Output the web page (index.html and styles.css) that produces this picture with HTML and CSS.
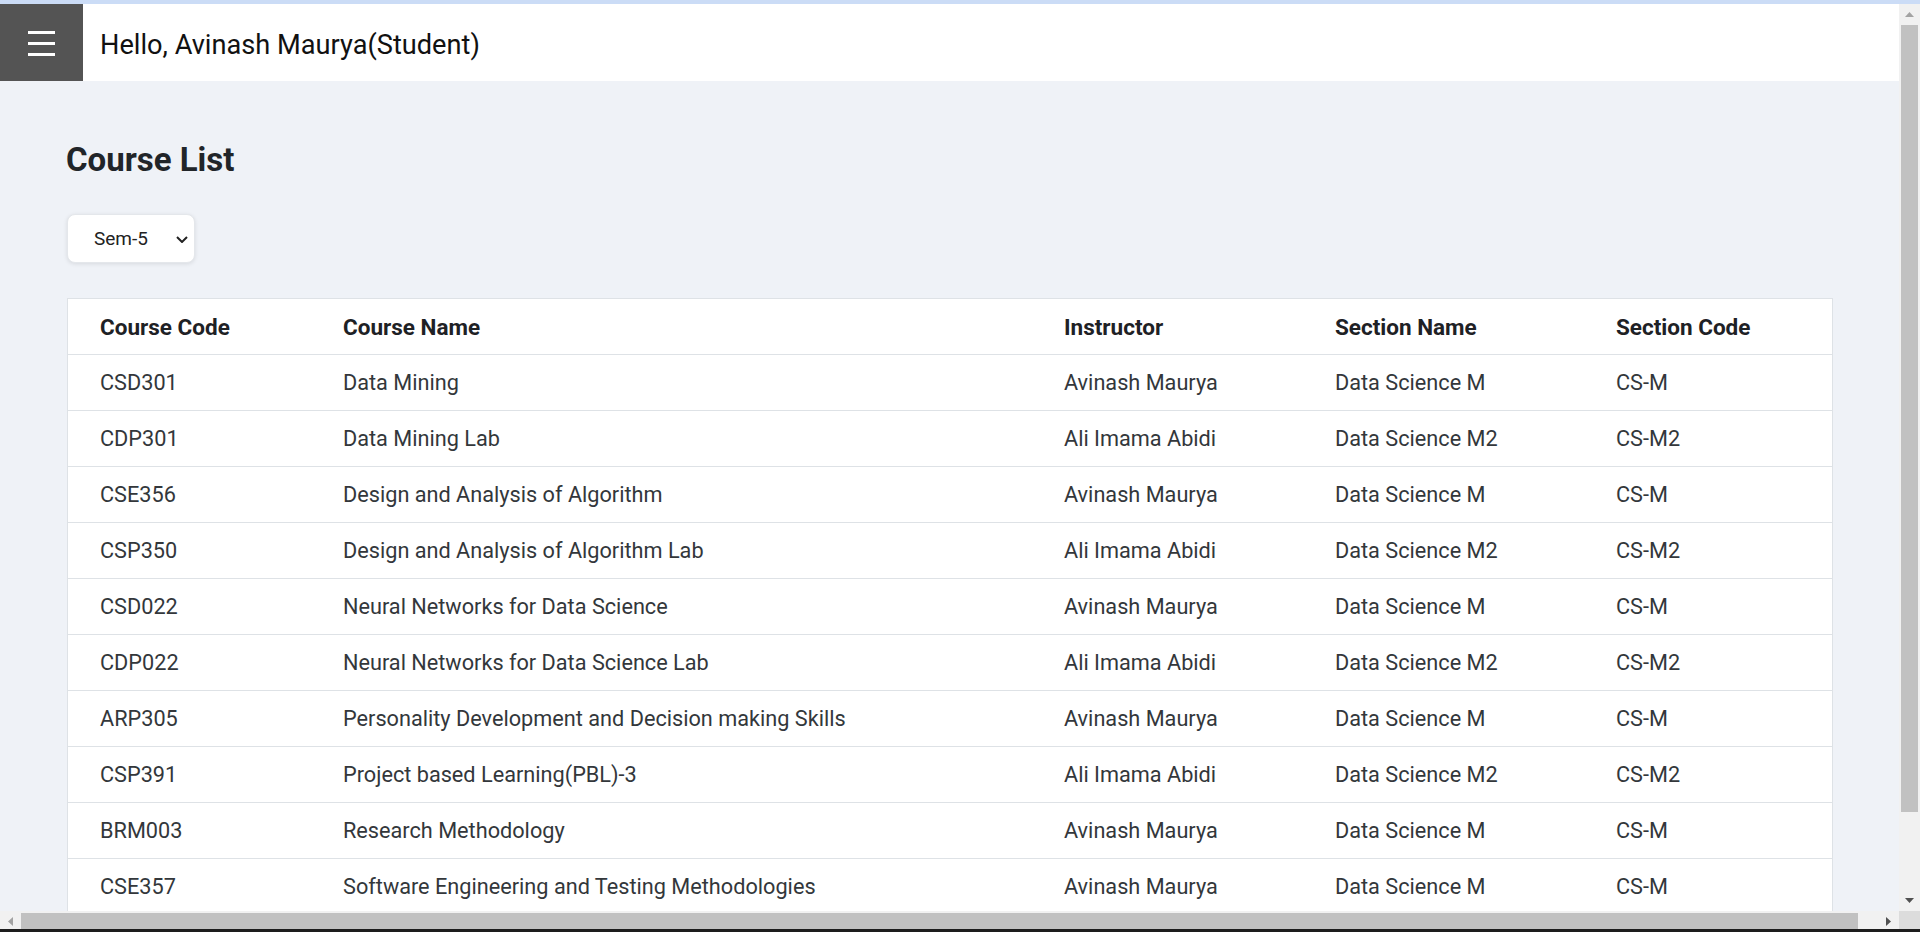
FILE: index.html
```html
<!DOCTYPE html>
<html lang="en">
<head>
<meta charset="utf-8">
<title>Course List</title>
<link rel="stylesheet" href="styles.css">
</head>
<body>
<div class="topline"></div>
<div class="app">
  <header class="topbar">
    <button class="menu" aria-label="Menu"><span></span><span></span><span></span></button>
    <div class="greeting">Hello, Avinash Maurya(Student)</div>
  </header>
  <main class="content">
    <h1 class="title">Course List</h1>
    <div class="select-wrap">
      <select class="sem"><option>Sem-5</option></select>
      <svg class="chev" width="12" height="7" viewBox="0 0 12 7"><path d="M1 1 L6 6 L11 1" fill="none" stroke="#222" stroke-width="2"/></svg>
    </div>
    <div class="card">
      <table class="courses">
        <colgroup>
          <col class="c1"><col class="c2"><col class="c3"><col class="c4"><col class="c5">
        </colgroup>
        <thead>
          <tr><th>Course Code</th><th>Course Name</th><th>Instructor</th><th>Section Name</th><th>Section Code</th></tr>
        </thead>
        <tbody>
          <tr><td>CSD301</td><td>Data Mining</td><td>Avinash Maurya</td><td>Data Science M</td><td>CS-M</td></tr>
          <tr><td>CDP301</td><td>Data Mining Lab</td><td>Ali Imama Abidi</td><td>Data Science M2</td><td>CS-M2</td></tr>
          <tr><td>CSE356</td><td>Design and Analysis of Algorithm</td><td>Avinash Maurya</td><td>Data Science M</td><td>CS-M</td></tr>
          <tr><td>CSP350</td><td>Design and Analysis of Algorithm Lab</td><td>Ali Imama Abidi</td><td>Data Science M2</td><td>CS-M2</td></tr>
          <tr><td>CSD022</td><td>Neural Networks for Data Science</td><td>Avinash Maurya</td><td>Data Science M</td><td>CS-M</td></tr>
          <tr><td>CDP022</td><td>Neural Networks for Data Science Lab</td><td>Ali Imama Abidi</td><td>Data Science M2</td><td>CS-M2</td></tr>
          <tr><td>ARP305</td><td>Personality Development and Decision making Skills</td><td>Avinash Maurya</td><td>Data Science M</td><td>CS-M</td></tr>
          <tr><td>CSP391</td><td>Project based Learning(PBL)-3</td><td>Ali Imama Abidi</td><td>Data Science M2</td><td>CS-M2</td></tr>
          <tr><td>BRM003</td><td>Research Methodology</td><td>Avinash Maurya</td><td>Data Science M</td><td>CS-M</td></tr>
          <tr><td>CSE357</td><td>Software Engineering and Testing Methodologies</td><td>Avinash Maurya</td><td>Data Science M</td><td>CS-M</td></tr>
        </tbody>
      </table>
    </div>
  </main>
</div>
<div class="vscroll">
  <div class="sbtn"><svg width="9" height="5" viewBox="0 0 9 5"><polygon points="0,5 4.5,0 9,5" fill="#a3a3a3"/></svg></div>
  <div class="vthumb"></div>
  <div class="vrest"></div>
  <div class="sbtn"><svg width="9" height="5" viewBox="0 0 9 5"><polygon points="0,0 9,0 4.5,5" fill="#505050"/></svg></div>
</div>
<div class="hscroll">
  <div class="hbtn"><svg width="5" height="9" viewBox="0 0 5 9"><polygon points="5,0 5,9 0,4.5" fill="#a3a3a3"/></svg></div>
  <div class="hthumb"></div>
  <div class="hrest"></div>
  <div class="hbtn"><svg width="5" height="9" viewBox="0 0 5 9"><polygon points="0,0 5,4.5 0,9" fill="#505050"/></svg></div>
</div>
<div class="corner"></div>
<div class="taskbar"></div>
</body>
</html>
```

FILE: styles.css
```css
* { box-sizing: border-box; }

html, body {
  margin: 0;
  height: 932px;
  overflow: hidden;
}

body {
  display: grid;
  grid-template-columns: 1fr 21px;
  grid-template-rows: 4px 907px 18px 3px;
  font-family: Roboto, "Noto Sans", sans-serif;
  background: #eff2f7;
}

.topline {
  grid-column: 1 / 3;
  background: #cbdcf6;
}

.app {
  grid-column: 1;
  grid-row: 2;
  overflow: hidden;
  background: #eff2f7;
}

.topbar {
  display: flex;
  align-items: center;
  height: 77px;
  background: #ffffff;
}

.menu {
  width: 83px;
  height: 77px;
  border: 0;
  padding: 2px 0 0 0;
  background: #545454;
  display: flex;
  flex-direction: column;
  align-items: center;
  justify-content: center;
  gap: 8px;
}

.menu span {
  display: block;
  width: 27px;
  height: 3px;
  background: #ffffff;
}

.greeting {
  padding: 5px 0 0 17px;
  font-size: 27.2px;
  color: #111111;
}

.content {
  padding: 0 66px 0 67px;
}

.title {
  margin: 59px 0 0 -1px;
  font-size: 33px;
  line-height: 40px;
  font-weight: 700;
  color: #212529;
}

.select-wrap {
  position: relative;
  width: 128px;
  height: 49px;
  margin-top: 34px;
}

.sem {
  appearance: none;
  -webkit-appearance: none;
  width: 128px;
  height: 49px;
  padding: 0 0 0 26px;
  border: 1px solid #e4e7eb;
  border-radius: 8px;
  background: #ffffff;
  box-shadow: 0 1px 4px rgba(0, 0, 0, 0.10);
  font-family: Roboto, "Noto Sans", sans-serif;
  font-size: 19px;
  color: #222222;
}

.chev {
  position: absolute;
  left: 109px;
  top: 22px;
  pointer-events: none;
}

.card {
  margin-top: 35px;
}

.courses {
  width: 1766px;
  table-layout: fixed;
  border-collapse: separate;
  border-spacing: 0;
  border: 1px solid #dee2e6;
  border-bottom: 0;
  background: #ffffff;
}

.c1 { width: 243px; }
.c2 { width: 721px; }
.c3 { width: 271px; }
.c4 { width: 281px; }
.c5 { width: 248px; }

.courses th,
.courses td {
  height: 56px;
  padding: 0 0 0 32px;
  border-bottom: 1px solid #dee2e6;
  text-align: left;
  vertical-align: middle;
  white-space: nowrap;
}

.courses th {
  font-size: 22.5px;
  font-weight: 700;
  color: #1e2125;
}

.courses td {
  font-size: 21.7px;
  color: #33373b;
}

.vscroll {
  grid-column: 2;
  grid-row: 2;
  display: flex;
  flex-direction: column;
  background: #f1f1f1;
}

.sbtn {
  height: 21px;
  display: flex;
  align-items: center;
  justify-content: center;
}

.vthumb {
  height: 787px;
  margin: 0 2px;
  background: #c1c1c1;
}

.vrest { flex: 1; }

.hscroll {
  grid-column: 1;
  grid-row: 3;
  display: flex;
  background: #f1f1f1;
}

.hbtn {
  width: 21px;
  display: flex;
  align-items: center;
  justify-content: center;
  padding-top: 2px;
}

.hthumb {
  width: 1837px;
  margin-top: 2px;
  background: #c1c1c1;
}

.hrest { flex: 1; }

.corner {
  grid-column: 2;
  grid-row: 3;
  background: #dcdcdc;
}

.taskbar {
  grid-column: 1 / 3;
  grid-row: 4;
  background: #1d1d1d;
}
```
